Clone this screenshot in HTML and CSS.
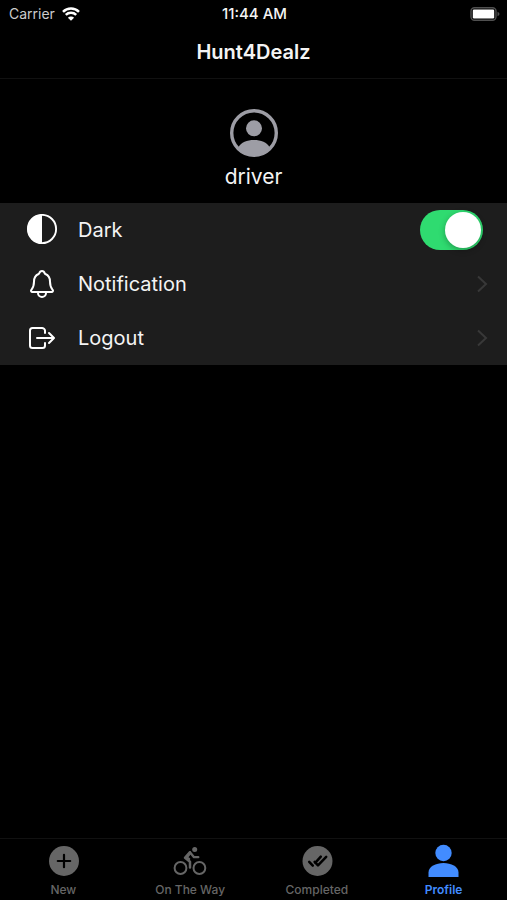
FILE: index.html
```html
<!DOCTYPE html>
<html lang="en">
<head>
<meta charset="utf-8">
<meta name="viewport" content="width=device-width, initial-scale=1">
<title>Hunt4Dealz</title>
<link rel="stylesheet" href="styles.css">
</head>
<body>
<div class="app">
  <header class="header">
    <div class="status">
      <div class="carrier">
        <span>Carrier</span>
        <svg class="wifi" viewBox="0 0 18 14" aria-hidden="true">
          <path d="M1 4.800a11.400 11.400 0 0 1 16 0M3.800 7.800a7.400 7.400 0 0 1 10.400 0" fill="none" stroke="#fff" stroke-width="2.500"/>
          <path d="M9 13.800 5.900 10.700a4.400 4.400 0 0 1 6.200 0z" fill="#fff"/>
        </svg>
      </div>
      <time class="clock">11:44 AM</time>
      <svg class="battery" viewBox="0 0 30 14" aria-hidden="true">
        <rect x="1" y="0.800" width="25" height="12.400" rx="3.500" fill="none" stroke="#505050" stroke-width="1.400"/>
        <rect x="2.800" y="2.500" width="21.400" height="9" rx="1.200" fill="#fff"/>
        <path d="M27.500 4.800q2 .7 2 2.200t-2 2.200z" fill="#505050"/>
      </svg>
    </div>
    <h1 class="title">Hunt4Dealz</h1>
  </header>

  <main class="content">
    <section class="user">
      <svg class="avatar" viewBox="0 0 48 48" aria-hidden="true">
        <defs><clipPath id="ring"><circle cx="24" cy="24" r="23"/></clipPath></defs>
        <circle cx="24" cy="24" r="22.300" fill="none" stroke="#9d9da5" stroke-width="3.400"/>
        <circle cx="24" cy="19.300" r="8" fill="#9d9da5"/>
        <path clip-path="url(#ring)" d="M8.500 38C11 33.500 17 31 24 31s13 2.500 15.500 7L36 48H12z" fill="#9d9da5"/>
      </svg>
      <p class="name">driver</p>
    </section>

    <div class="list">
      <label class="row" for="dark">
        <svg class="icon" viewBox="0 0 32 32" aria-hidden="true">
          <circle cx="16" cy="15" r="14.100" fill="none" stroke="#fff" stroke-width="1.900"/>
          <path d="M16 .5a14.500 14.500 0 0 0 0 29z" fill="#fff"/>
        </svg>
        <span class="label">Dark</span>
        <input class="toggle" id="dark" type="checkbox" role="switch" checked>
      </label>
      <button class="row" type="button">
        <svg class="icon" viewBox="0 0 512 512" aria-hidden="true">
          <path d="M427.680 351.430C402 320 383.870 304 383.870 217.350 383.870 138 343.350 109.730 310 96c-4.430-1.820-8.600-6-9.950-10.550C294.200 65.540 277.800 48 256 48s-38.210 17.550-44 37.470c-1.350 4.600-5.520 8.710-9.950 10.530-33.390 13.750-73.870 41.920-73.870 121.350C128.130 304 110 320 84.320 351.430 73.680 364.450 83 384 101.610 384h308.780c18.510 0 27.770-19.610 17.290-32.570zM320 384v16a64 64 0 0 1-128 0v-16" fill="none" stroke="#fff" stroke-width="32" stroke-linecap="round" stroke-linejoin="round"/>
        </svg>
        <span class="label">Notification</span>
        <svg class="chevron" viewBox="0 0 12 18" aria-hidden="true"><path d="M2 1.500 10 9l-8 7.500"/></svg>
      </button>
      <button class="row" type="button">
        <svg class="icon" viewBox="0 0 512 512" aria-hidden="true">
          <path d="M304 336v40a40 40 0 0 1-40 40H104a40 40 0 0 1-40-40V136a40 40 0 0 1 40-40h152c22.090 0 48 17.910 48 40v40M368 336l80-80-80-80M176 256h256" fill="none" stroke="#fff" stroke-width="32" stroke-linecap="round" stroke-linejoin="round"/>
        </svg>
        <span class="label">Logout</span>
        <svg class="chevron" viewBox="0 0 12 18" aria-hidden="true"><path d="M2 1.500 10 9l-8 7.500"/></svg>
      </button>
    </div>
  </main>

  <nav class="tabs">
    <a class="tab" href="#new">
      <svg class="tab-icon" viewBox="0 0 34 34" aria-hidden="true">
        <circle cx="18" cy="17" r="15" fill="currentColor"/>
        <path d="M18 10.800v12.400M11.800 17h12.400" stroke="#000" stroke-width="2.200" stroke-linecap="round"/>
      </svg>
      <span>New</span>
    </a>
    <a class="tab" href="#on-the-way">
      <svg class="tab-icon" viewBox="0 0 34 34" aria-hidden="true">
        <g fill="none" stroke="currentColor" stroke-linejoin="round" stroke-linecap="round">
          <circle cx="7.500" cy="24" r="5.900" stroke-width="2"/>
          <circle cx="26.400" cy="24" r="5.900" stroke-width="2"/>
          <path d="M17 23.500V17.800L12 13.800 16.800 8.300" stroke-width="2.500"/>
          <path d="m17 8.300 4 4.900h4.300" stroke-width="2.300"/>
          <path d="m17 9.500-3.200 4 2.400 1.500" stroke-width="2.200"/>
        </g>
        <circle cx="21.700" cy="5.400" r="2.500" fill="currentColor"/>
      </svg>
      <span>On The Way</span>
    </a>
    <a class="tab" href="#completed">
      <svg class="tab-icon" viewBox="0 0 34 34" aria-hidden="true">
        <circle cx="17.500" cy="17" r="15" fill="currentColor"/>
        <path d="m9.200 17.800 3.600 3.800M14.600 17.800l3.400 3.600 8.200-8.600M15.200 18.800l5.600-6.200" fill="none" stroke="#000" stroke-width="2.500" stroke-linecap="round" stroke-linejoin="round"/>
      </svg>
      <span>Completed</span>
    </a>
    <a class="tab tab-active" href="#profile" aria-current="page">
      <svg class="tab-icon" viewBox="0 0 34 34" aria-hidden="true">
        <circle cx="16.500" cy="9" r="8.200" fill="currentColor"/>
        <path d="M1.500 33v-4.500C1.500 22.500 9 19 16.500 19s15 3.500 15 9.500V33z" fill="currentColor"/>
      </svg>
      <span>Profile</span>
    </a>
  </nav>
</div>
</body>
</html>
```
FILE: styles.css
```css
* {
  box-sizing: border-box;
}

body {
  margin: 0;
  background: #000;
  color: #f4f4f4;
  font-family: Inter, "Liberation Sans", sans-serif;
}

.app {
  display: flex;
  flex-direction: column;
  min-height: 100vh;
}

.header {
  border-bottom: 1px solid #111;
}

.status {
  display: grid;
  grid-template-columns: 1fr auto 1fr;
  align-items: center;
  height: 27px;
  padding: 0 7px 0 9px;
  font-size: 14px;
}

.carrier {
  display: flex;
  align-items: center;
  gap: 7px;
  color: #ccc;
}

.wifi {
  width: 18px;
  height: 14px;
}

.clock {
  font-size: 15px;
  font-weight: 500;
}

.battery {
  width: 30px;
  height: 14px;
  justify-self: end;
}

.title {
  margin: 0;
  padding: 13px 0 14px;
  font-size: 20px;
  font-weight: 600;
  line-height: 24px;
  text-align: center;
}

.content {
  flex: 1;
}

.user {
  display: flex;
  flex-direction: column;
  align-items: center;
  gap: 6px;
  padding: 30px 0 12px;
}

.avatar {
  width: 48px;
  height: 48px;
}

.name {
  margin: 0;
  font-size: 21px;
  line-height: 28px;
}

.list {
  background: #1d1d1d;
}

.row {
  display: flex;
  align-items: center;
  width: 100%;
  height: 54px;
  padding: 0 24px 0 26px;
  border: 0;
  background: none;
  color: inherit;
  font: inherit;
  font-size: 20px;
  text-align: left;
}

.icon {
  width: 32px;
  height: 32px;
  margin-right: 20px;
}

.label {
  flex: 1;
}

.toggle {
  display: flex;
  align-items: center;
  justify-content: flex-end;
  width: 63px;
  height: 40px;
  margin: 0;
  padding: 2px;
  border-radius: 20px;
  background: #2fdb70;
  appearance: none;
}

.toggle::before {
  content: "";
  width: 36px;
  height: 36px;
  border-radius: 50%;
  background: #fff;
  box-shadow: 0 2px 6px rgba(0, 0, 0, 0.3);
}

.toggle:not(:checked) {
  justify-content: flex-start;
  background: #39393d;
}

.chevron {
  width: 12px;
  height: 18px;
  margin-right: -5px;
  fill: none;
  stroke: #383838;
  stroke-width: 2;
}

.tabs {
  display: grid;
  grid-template-columns: repeat(4, 1fr);
  border-top: 1px solid #111;
}

.tab {
  display: flex;
  flex-direction: column;
  align-items: center;
  gap: 4px;
  padding: 5px 0 2px;
  color: #666;
  font-size: 12px;
  font-weight: 500;
  line-height: 16px;
  text-decoration: none;
}

.tab-icon {
  width: 34px;
  height: 34px;
}

.tab-active {
  color: #428cff;
  font-weight: 600;
}
```
